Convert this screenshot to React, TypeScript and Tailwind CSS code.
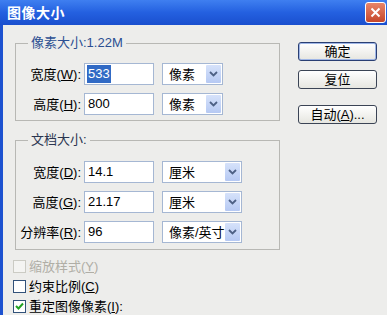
import React from 'react';

const font = { fontFamily: '"Liberation Sans", "Noto Sans CJK SC", sans-serif' };

function Chevron() {
  return (
    <svg width="9" height="6" viewBox="0 0 9 6">
      <path d="M1 1 L4.5 4.5 L8 1" fill="none" stroke="#4d6185" strokeWidth="1.8" />
    </svg>
  );
}

function Select({ value, width }: { value: string; width: string }) {
  return (
    <div className={`${width} h-[22px] ml-[8px] flex items-center justify-between bg-white border border-[#a5b7d3]`}>
      <span className="pl-[6px] text-[13px] leading-none text-black">{value}</span>
      <div className="w-[15px] h-[18px] mr-[1px] flex items-center justify-center bg-gradient-to-b from-[#d6e2fa] to-[#b6c9f3] rounded-[1px]">
        <Chevron />
      </div>
    </div>
  );
}

function Row({ label, hot, rest, value, unit, unitWidth, selected }: any) {
  return (
    <div className="flex items-center h-[22px]">
      <div className="w-[65px] text-right text-[13px] leading-none text-black whitespace-nowrap">
        {label}(<u>{hot}</u>){rest}:
      </div>
      <div className="w-[70px] h-[22px] ml-[3px] flex items-center bg-white border border-[#a5b7d3] pl-[2px]">
        <span className={`text-[13px] leading-[18px] px-[1px] ${selected ? 'bg-[#316ac5] text-white' : 'text-black'}`}>{value}</span>
      </div>
      <Select value={unit} width={unitWidth} />
    </div>
  );
}

function Check({ label, hot, checked, disabled, tail }: any) {
  return (
    <div className="flex items-center h-[20px]">
      <div
        className={`w-[13px] h-[13px] border flex items-center justify-center ${
          disabled ? 'border-[#cbcbc4] bg-[#f4f4f2]' : 'border-[#32527a] bg-white'
        }`}
      >
        {checked && (
          <svg width="9" height="8" viewBox="0 0 9 8">
            <path d="M1 4 L3.5 6.5 L8 1.5" fill="none" stroke="#21a121" strokeWidth="2" />
          </svg>
        )}
      </div>
      <span className={`ml-[3px] text-[13px] leading-none ${disabled ? 'text-[#b0aea6]' : 'text-black'}`}>
        {label}(<u>{hot}</u>){tail}
      </span>
    </div>
  );
}

function Button({ children, primary }: { children: React.ReactNode; primary?: boolean }) {
  return (
    <button
      className={`w-[79px] h-[19px] flex items-center justify-center rounded-[3px] border text-[13px] leading-none text-black bg-gradient-to-b from-[#ffffff] to-[#e6e6e0] ${
        primary ? 'border-[#2a3f73] shadow-[inset_0_0_0_1px_#9fb6e6]' : 'border-[#3b4455]'
      }`}
    >
      {children}
    </button>
  );
}

export default function App() {
  return (
    <div className="w-[387px] h-[315px] overflow-hidden bg-[#ededeb] flex flex-col" style={font}>
      {/* title bar */}
      <div className="h-[25px] shrink-0 flex items-center justify-between bg-gradient-to-b from-[#3f7ff0] via-[#2460e0] to-[#1a4fce] pl-[7px] pr-[1px]">
        <span className="text-white font-bold text-[14px] leading-none tracking-[0.5px]">图像大小</span>
        <div className="w-[21px] h-[21px] rounded-[3px] border border-white bg-gradient-to-b from-[#e8856a] to-[#c5462a] flex items-center justify-center">
          <svg width="11" height="11" viewBox="0 0 11 11">
            <path d="M1.5 1.5 L9.5 9.5 M9.5 1.5 L1.5 9.5" stroke="white" strokeWidth="2" />
          </svg>
        </div>
      </div>

      <div className="flex flex-1 border-l-[3px] border-[#1d52d0]">
        <div className="w-[267px] ml-[10px] pt-[11px] flex flex-col">
          <fieldset className="ml-[2px] w-[265px] border border-[#b8b8b4] pl-0 pr-0 pt-[13px] pb-[5px] flex flex-col gap-[8px]">
            <legend className="ml-[12px] px-[3px] text-[13px] leading-[14px] text-[#2b4f92]">像素大小:1.22M</legend>
            <Row label="宽度" hot="W" rest="" value="533" unit="像素" unitWidth="w-[61px]" selected />
            <Row label="高度" hot="H" rest="" value="800" unit="像素" unitWidth="w-[61px]" />
          </fieldset>

          <fieldset className="ml-[2px] mt-[12px] w-[265px] border border-[#b8b8b4] pt-[14px] pb-[6px] flex flex-col gap-[8px]">
            <legend className="ml-[12px] px-[3px] text-[13px] leading-[14px] text-[#2b3550]">文档大小:</legend>
            <Row label="宽度" hot="D" rest="" value="14.1" unit="厘米" unitWidth="w-[80px]" />
            <Row label="高度" hot="G" rest="" value="21.17" unit="厘米" unitWidth="w-[80px]" />
            <Row label="分辨率" hot="R" rest="" value="96" unit="像素/英寸" unitWidth="w-[80px]" />
          </fieldset>

          <div className="mt-[6px] flex flex-col">
            <Check label="缩放样式" hot="Y" disabled />
            <Check label="约束比例" hot="C" />
            <Check label="重定图像像素" hot="I" tail=":" checked />
          </div>
        </div>

        <div className="ml-[18px] pt-[17px] flex flex-col">
          <Button primary>确定</Button>
          <div className="mt-[9px]">
            <Button>复位</Button>
          </div>
          <div className="mt-[16px]">
            <Button>
              自动(<u>A</u>)...
            </Button>
          </div>
        </div>
      </div>
    </div>
  );
}
